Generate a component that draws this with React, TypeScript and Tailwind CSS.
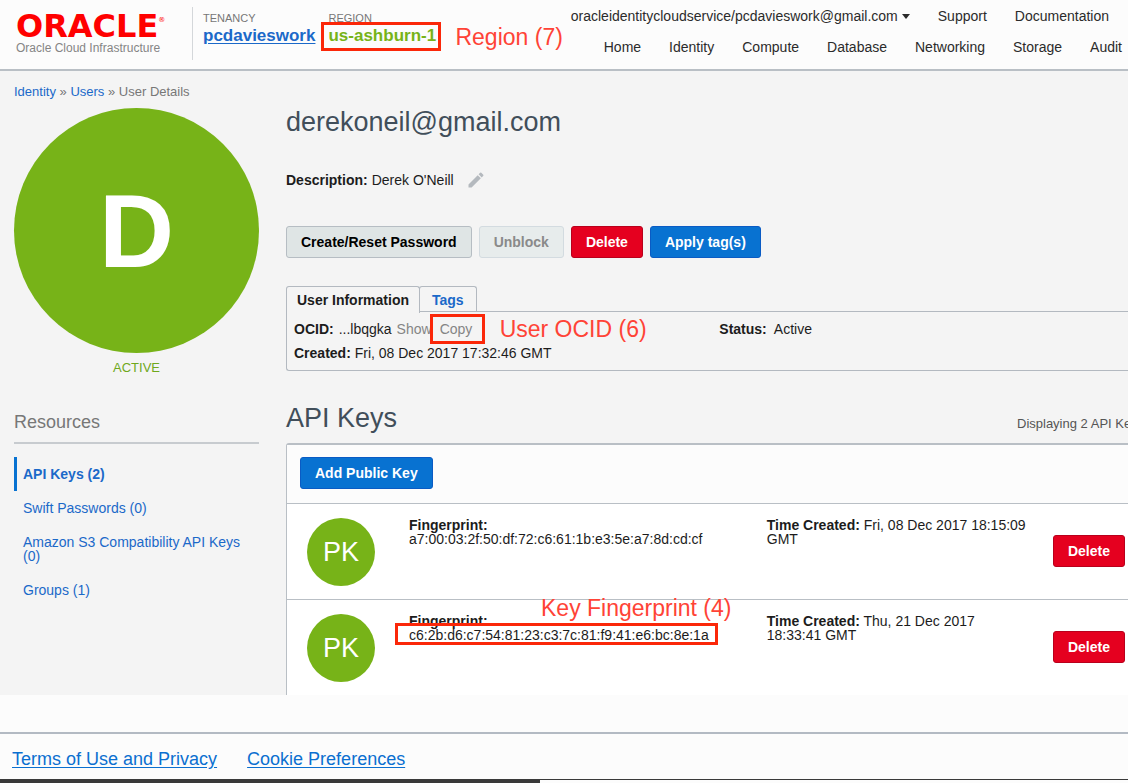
import React from "react";
import { MdEdit } from "react-icons/md";

const primaryNav = ["Home", "Identity", "Compute", "Database", "Networking", "Storage", "Audit"];

const resources = [
  { label: "API Keys (2)", active: true },
  { label: "Swift Passwords (0)", active: false },
  { label: "Amazon S3 Compatibility API Keys (0)", active: false },
  { label: "Groups (1)", active: false },
];

const keys = [
  {
    fingerprint: "a7:00:03:2f:50:df:72:c6:61:1b:e3:5e:a7:8d:cd:cf",
    created: "Fri, 08 Dec 2017 18:15:09 GMT",
    highlighted: false,
  },
  {
    fingerprint: "c6:2b:d6:c7:54:81:23:c3:7c:81:f9:41:e6:bc:8e:1a",
    created: "Thu, 21 Dec 2017 18:33:41 GMT",
    highlighted: true,
  },
];

const buttonTones = {
  neutral: "border-[#b6bdc3] bg-[#dfe5e5] text-black",
  muted: "border-[#d3dbe0] bg-[#e7ecec] text-[#8a8a8a]",
  danger: "border-[#b9001c] bg-[#e5001f] text-white",
  primary: "border-[#0a5bc4] bg-[#0872d1] text-white",
};

function Button({
  tone,
  disabled,
  children,
}: {
  tone: keyof typeof buttonTones;
  disabled?: boolean;
  children: React.ReactNode;
}) {
  return (
    <button
      type="button"
      disabled={disabled}
      className={`h-8 shrink-0 rounded-[3px] border px-[14px] text-sm font-bold whitespace-nowrap ${buttonTones[tone]}`}
    >
      {children}
    </button>
  );
}

function Note({ className, children }: { className: string; children: React.ReactNode }) {
  return (
    <span className={`absolute text-[23px] leading-7 font-normal whitespace-nowrap text-[#ff4336] ${className}`}>
      {children}
    </span>
  );
}

function Outline({ className }: { className: string }) {
  return <span aria-hidden="true" className={`pointer-events-none absolute border-[3px] border-[#fb2709] ${className}`} />;
}

function Header() {
  return (
    <header className="flex h-[71px] items-start border-b-2 border-[#b9bfc5] bg-[#fcfcfc]">
      <a href="#" className="ml-4 mt-3 block w-[156px] shrink-0">
        <span className="flex items-start font-['DejaVu_Sans'] text-[32px] leading-7 font-bold text-[#ff0000]">
          ORACLE
          <sup className="top-0 mt-1 text-[7px] leading-[8px] font-normal">®</sup>
        </span>
        <span className="block text-xs leading-4 text-[#858585]">Oracle Cloud Infrastructure</span>
      </a>
      <dl className="mt-[7px] ml-5 flex h-[53px] shrink-0 border-l border-[#d4d7da] pt-[5px] pl-[10px]">
        <div>
          <dt className="text-[11px] leading-3 text-[#777]">TENANCY</dt>
          <dd className="text-[17px] leading-6 font-bold">
            <a href="#" className="text-[#1b69c9] underline underline-offset-2">
              pcdavieswork
            </a>
          </dd>
        </div>
        <div className="relative ml-[13px]">
          <dt className="text-[11px] leading-3 text-[#777]">REGION</dt>
          <dd className="text-[17px] leading-6 font-bold text-[#77b318]">us-ashburn-1</dd>
          <Outline className="-left-[7px] top-[10px] h-[29px] w-[120px]" />
          <Note className="left-[127px] top-[11px]">Region (7)</Note>
        </div>
      </dl>
      <div className="ml-auto shrink-0 pt-2 pr-[6px] text-sm leading-[17px] text-[#2b2b2b]">
        <div className="flex justify-end gap-7 pr-[13px]">
          <button type="button" className="flex items-center gap-1">
            oracleidentitycloudservice/pcdavieswork@gmail.com
            <span aria-hidden="true" className="border-x-4 border-t-5 border-x-transparent border-t-[#2b2b2b]" />
          </button>
          <a href="#">Support</a>
          <a href="#">Documentation</a>
        </div>
        <nav className="mt-[14px] flex justify-end gap-7">
          {primaryNav.map((item) => (
            <a key={item} href="#">
              {item}
            </a>
          ))}
        </nav>
      </div>
    </header>
  );
}

function Sidebar() {
  return (
    <aside className="w-[245px] shrink-0">
      <div className="flex aspect-square items-center justify-center rounded-full bg-[#77b318] text-[104px] leading-none font-bold text-white">
        D
      </div>
      <p className="mt-[7px] text-center text-[13px] leading-4 text-[#6fa81c]">ACTIVE</p>
      <h2 className="mt-9 border-b-2 border-[#c7cbcf] pb-[10px] text-lg leading-5 text-[#777]">Resources</h2>
      <ul className="mt-[13px] text-sm leading-[14px] text-[#1b69c9]">
        {resources.map((item) => (
          <li key={item.label}>
            <a
              href="#"
              className={`block border-l-[3px] py-[10px] pr-4 pl-[6px] ${
                item.active ? "border-[#0872d1] font-bold" : "border-transparent"
              }`}
            >
              {item.label}
            </a>
          </li>
        ))}
      </ul>
    </aside>
  );
}

function UserInformation() {
  return (
    <section className="mt-7">
      <div role="tablist" className="relative z-10 flex h-[26px] text-sm font-bold">
        <button
          type="button"
          role="tab"
          aria-selected="true"
          className="-mb-px rounded-t-[3px] border border-b-0 border-[#b3b9c0] bg-[#f4f4f4] px-[10px] text-[#1c1c1c]"
        >
          User Information
        </button>
        <button
          type="button"
          role="tab"
          aria-selected="false"
          className="-ml-px rounded-t-[3px] border border-b-0 border-[#b3b9c0] px-3 text-[#1b69c9]"
        >
          Tags
        </button>
      </div>
      <div className="-mt-px grid grid-cols-[51%_49%] rounded-bl-[3px] border border-r-0 border-[#b3b9c0] pt-[5px] pb-[5px] pl-[7px] text-sm leading-6 text-[#1c1c1c]">
        <div className="relative flex gap-[5px]">
          <b>OCID:</b>
          <span>...lbqgka</span>
          <button type="button" className="text-[#858585]">
            Show
          </button>
          <span className="relative ml-[3px]">
            <button type="button" className="text-[#858585]">
              Copy
            </button>
            <Outline className="-left-[10px] -top-[3px] h-[30px] w-[55px]" />
            <Note className="left-[60px] -top-[2px]">User OCID (6)</Note>
          </span>
        </div>
        <p>
          <b>Status:</b>&nbsp; Active
        </p>
        <p>
          <b>Created:</b> Fri, 08 Dec 2017 17:32:46 GMT
        </p>
      </div>
    </section>
  );
}

function ApiKeys() {
  return (
    <section className="mt-[31px]">
      <div className="flex items-end justify-between pb-[9px]">
        <h2 className="text-[27px] leading-8 text-[#414e5a]">API Keys</h2>
        <p className="w-[111px] text-[13px] leading-5 whitespace-nowrap text-[#555]">Displaying 2 API Keys</p>
      </div>
      <div className="rounded-tl-[3px] border-t-2 border-l border-[#b9bfc5] bg-white">
        <div className="bg-[#fcfcfc] px-[13px] pt-3 pb-[14px]">
          <Button tone="primary">Add Public Key</Button>
        </div>
        <ul>
          {keys.map((key) => (
            <li
              key={key.fingerprint}
              className="grid h-24 grid-cols-[102px_5fr_4fr_auto] items-start border-t border-[#b9bfc5] pt-[14px] pr-[3px] pl-5 text-sm leading-[14px] text-[#1c1c1c]"
            >
              <div className="flex size-[68px] items-center justify-center rounded-full bg-[#77b318] text-[27px] text-white">
                PK
              </div>
              <div className="relative">
                <b className="block">Fingerprint:</b>
                <span>{key.fingerprint}</span>
                {key.highlighted && (
                  <>
                    <Outline className="-left-[14px] top-[9px] h-[22px] w-[323px]" />
                    <Note className="left-[132px] -top-5">Key Fingerprint (4)</Note>
                  </>
                )}
              </div>
              <p className="pr-6">
                <b>Time Created:</b> {key.created}
              </p>
              <div className="self-start pt-[17px]">
                <Button tone="danger">Delete</Button>
              </div>
            </li>
          ))}
        </ul>
      </div>
    </section>
  );
}

export default function App() {
  return (
    <div className="overflow-hidden bg-[#fcfcfc] font-['Liberation_Sans',Arial,sans-serif]">
      <Header />
      <div className="bg-[#f4f4f4] pt-[13px] pl-[14px]">
        <nav aria-label="Breadcrumb" className="text-[13px] leading-4 text-[#777]">
          <a href="#" className="text-[#1b69c9]">
            Identity
          </a>{" "}
          »{" "}
          <a href="#" className="text-[#1b69c9]">
            Users
          </a>{" "}
          » User Details
        </nav>
        <div className="mt-2 flex gap-[27px]">
          <Sidebar />
          <main className="min-w-0 flex-1">
            <h1 className="text-[27px] leading-7 text-[#414e5a]">derekoneil@gmail.com</h1>
            <div className="mt-[34px] flex items-center text-sm leading-5 text-[#1c1c1c]">
              <b>Description:</b>
              <span className="ml-1">Derek O'Neill</span>
              <button type="button" aria-label="Edit description" className="ml-3 text-[#b4b9be]">
                <MdEdit size={20} />
              </button>
            </div>
            <div className="mt-9 flex gap-[7px]">
              <Button tone="neutral">Create/Reset Password</Button>
              <Button tone="muted" disabled>
                Unblock
              </Button>
              <Button tone="danger">Delete</Button>
              <Button tone="primary">Apply tag(s)</Button>
            </div>
            <UserInformation />
            <ApiKeys />
          </main>
        </div>
      </div>
      <footer className="mt-[37px] border-t-2 border-[#b3bac3]">
        <nav className="flex h-[45px] items-center gap-[30px] px-3 pt-1 text-lg text-[#0b6fd0]">
          <a href="#" className="underline underline-offset-2">
            Terms of Use and Privacy
          </a>
          <a href="#" className="underline underline-offset-2">
            Cookie Preferences
          </a>
        </nav>
        <div className="h-1 border-t border-[#3a3a3a]">
          <div className="h-[3px] w-[540px] bg-[#3a3a3a]" />
        </div>
      </footer>
    </div>
  );
}
